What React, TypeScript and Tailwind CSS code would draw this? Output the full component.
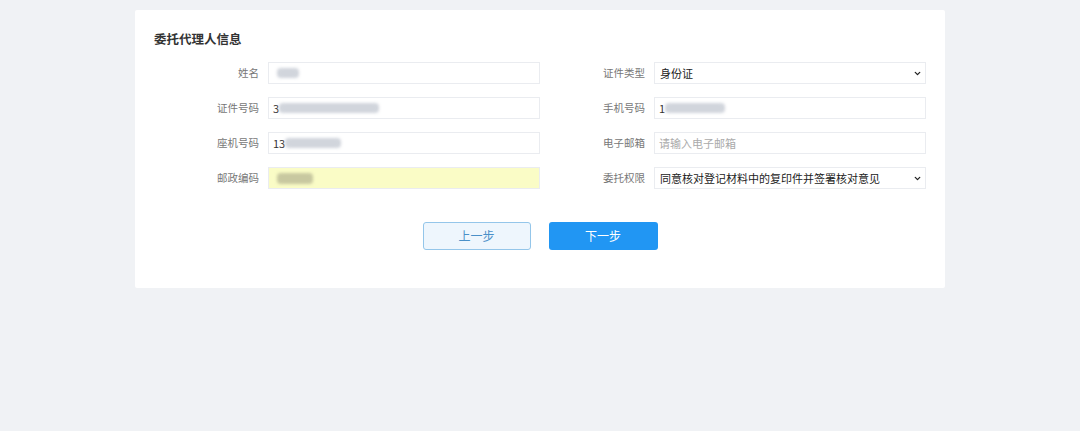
import { ChevronDown } from 'lucide-react'

const FONT = { fontFamily: '"Noto Sans CJK SC", "Noto Sans", sans-serif' }

function Blur({ w }: { w: number }) {
  return <span className="inline-block h-[10px] rounded-sm bg-gray-300 blur-[1.5px]" style={{ width: w }} />
}

function Field({ label, children, yellow }: { label: string; children: React.ReactNode; yellow?: boolean }) {
  return (
    <div className="flex h-[22px] items-center">
      <label className="w-[106px] pr-[1px] text-right text-[10.5px] text-[#777]">{label}</label>
      <div
        className={`ml-2 flex h-full flex-1 items-center border border-[#eaecf0] px-[4px] text-[11px] text-[#333] ${
          yellow ? 'bg-[#fafcc6]' : 'bg-white'
        }`}
      >
        {children}
      </div>
    </div>
  )
}

function SelectBox({ value }: { value: string }) {
  return (
    <div className="flex w-full items-center justify-between pl-[1px] pr-0">
      <span className="text-[11px] text-[#222]">{value}</span>
      <ChevronDown className="-mr-[1px] h-[9px] w-[9px] text-[#222]" strokeWidth={3.5} />
    </div>
  )
}

export default function App() {
  return (
    <div className="min-h-[431px] bg-[#f0f2f5] pt-[10px]" style={FONT}>
      <div className="mx-auto w-[810px] rounded-[2px] bg-white px-[19px] pb-[38px] pt-[19px]">
        <h2 className="text-[12.5px] font-bold leading-[20px] text-[#333]">委托代理人信息</h2>

        <div className="mt-[13px] grid grid-cols-2 gap-y-[13px]">
          <Field label="姓名">
            <span className="ml-[4px]"><Blur w={22} /></span>
          </Field>
          <Field label="证件类型">
            <SelectBox value="身份证" />
          </Field>

          <Field label="证件号码">
            <span>3</span>
            <Blur w={100} />
          </Field>
          <Field label="手机号码">
            <span>1</span>
            <Blur w={60} />
          </Field>

          <Field label="座机号码">
            <span>13</span>
            <Blur w={56} />
          </Field>
          <Field label="电子邮箱">
            <span className="text-[#aaa]">请输入电子邮箱</span>
          </Field>

          <Field label="邮政编码" yellow>
            <span className="ml-[4px] inline-block h-[11px] w-[36px] rounded-sm bg-[#c8c8a0] blur-[1.5px]" />
          </Field>
          <Field label="委托权限">
            <SelectBox value="同意核对登记材料中的复印件并签署核对意见" />
          </Field>
        </div>

        <div className="mt-[33px] flex justify-center gap-[18px]">
          <button className="h-[28px] w-[108px] rounded-[3px] border border-[#94c6ea] bg-[#eef6fd] text-[12px] text-[#4a90c8]">
            上一步
          </button>
          <button className="h-[28px] w-[109px] rounded-[3px] bg-[#2196f3] text-[12px] text-white">
            下一步
          </button>
        </div>
      </div>
    </div>
  )
}
